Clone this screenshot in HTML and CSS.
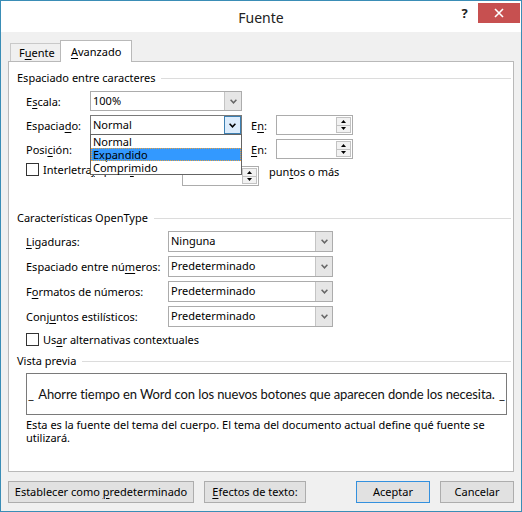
FILE: index.html
```html
<!DOCTYPE html>
<html lang="es">
<head>
    <meta charset="UTF-8">
    <title>Fuente</title>
    <link rel="stylesheet" href="styles.css">
</head>
<body>

<div class="window">
    <div class="titlebar">
        <span class="title">Fuente</span>
        <div class="caption-buttons">
            <span class="help">?</span>
            <span class="close">
                <svg width="10" height="10" viewBox="0 0 10 10"><path d="M1 1L9 9M9 1L1 9" stroke="#fff" stroke-width="1.6"/></svg>
            </span>
        </div>
    </div>

    <div class="client">
        <div class="tabs">
            <span class="tab">F<u>u</u>ente</span>
            <span class="tab active"><u>A</u>vanzado</span>
        </div>

        <div class="panel">
            <!-- Espaciado entre caracteres -->
            <div class="group-title first"><span>Espaciado entre caracteres</span></div>

            <div class="row first-row">
                <span class="lbl lbl-short">E<u>s</u>cala:</span>
                <div class="combo combo-short">
                    <span class="value">100%</span>
                    <span class="arrow"><svg width="7" height="5" viewBox="0 0 7 5"><path d="M0.6 0.8L3.5 3.8L6.4 0.8" fill="none" stroke="#666" stroke-width="1.5"/></svg></span>
                </div>
            </div>

            <div class="row">
                <span class="lbl lbl-short">Espacia<u>d</u>o:</span>
                <div class="combo combo-short focused">
                    <span class="value">Normal</span>
                    <span class="arrow"><svg width="7" height="5" viewBox="0 0 7 5"><path d="M0.6 0.8L3.5 3.8L6.4 0.8" fill="none" stroke="#000" stroke-width="1.5"/></svg></span>
                    <ul class="dropdown">
                        <li>Normal</li>
                        <li class="selected">Expandido</li>
                        <li>Comprimido</li>
                    </ul>
                </div>
                <span class="lbl lbl-en">E<u>n</u>:</span>
                <div class="spin">
                    <span class="spin-field"></span>
                    <span class="spin-btns">
                        <span class="spin-up"><svg width="5" height="3" viewBox="0 0 5 3"><path d="M2.5 0L5 3H0Z" fill="#000"/></svg></span>
                        <span class="spin-down"><svg width="5" height="3" viewBox="0 0 5 3"><path d="M0 0H5L2.5 3Z" fill="#000"/></svg></span>
                    </span>
                </div>
            </div>

            <div class="row">
                <span class="lbl lbl-short">Posi<u>c</u>ión:</span>
                <div class="combo combo-short">
                    <span class="value">Normal</span>
                    <span class="arrow"><svg width="7" height="5" viewBox="0 0 7 5"><path d="M0.6 0.8L3.5 3.8L6.4 0.8" fill="none" stroke="#666" stroke-width="1.5"/></svg></span>
                </div>
                <span class="lbl lbl-en"><u>E</u>n:</span>
                <div class="spin">
                    <span class="spin-field"></span>
                    <span class="spin-btns">
                        <span class="spin-up"><svg width="5" height="3" viewBox="0 0 5 3"><path d="M2.5 0L5 3H0Z" fill="#000"/></svg></span>
                        <span class="spin-down"><svg width="5" height="3" viewBox="0 0 5 3"><path d="M0 0H5L2.5 3Z" fill="#000"/></svg></span>
                    </span>
                </div>
            </div>

            <div class="row kerning-row">
                <span class="checkbox"></span>
                <span class="lbl lbl-kerning">Interletra<u>j</u>e para <u>f</u>uentes:</span>
                <div class="spin kerning-spin">
                    <span class="spin-field"></span>
                    <span class="spin-btns">
                        <span class="spin-up"><svg width="5" height="3" viewBox="0 0 5 3"><path d="M2.5 0L5 3H0Z" fill="#000"/></svg></span>
                        <span class="spin-down"><svg width="5" height="3" viewBox="0 0 5 3"><path d="M0 0H5L2.5 3Z" fill="#000"/></svg></span>
                    </span>
                </div>
                <span class="lbl lbl-points">pun<u>t</u>os o más</span>
            </div>

            <!-- Características OpenType -->
            <div class="group-title second"><span>Características OpenType</span></div>

            <div class="row wide first-row">
                <span class="lbl lbl-long"><u>L</u>igaduras:</span>
                <div class="combo combo-long">
                    <span class="value">Ninguna</span>
                    <span class="arrow"><svg width="7" height="5" viewBox="0 0 7 5"><path d="M0.6 0.8L3.5 3.8L6.4 0.8" fill="none" stroke="#666" stroke-width="1.5"/></svg></span>
                </div>
            </div>
            <div class="row wide">
                <span class="lbl lbl-long">Espaciado entre nú<u>m</u>eros:</span>
                <div class="combo combo-long">
                    <span class="value">Predeterminado</span>
                    <span class="arrow"><svg width="7" height="5" viewBox="0 0 7 5"><path d="M0.6 0.8L3.5 3.8L6.4 0.8" fill="none" stroke="#666" stroke-width="1.5"/></svg></span>
                </div>
            </div>
            <div class="row wide">
                <span class="lbl lbl-long">F<u>o</u>rmatos de números:</span>
                <div class="combo combo-long">
                    <span class="value">Predeterminado</span>
                    <span class="arrow"><svg width="7" height="5" viewBox="0 0 7 5"><path d="M0.6 0.8L3.5 3.8L6.4 0.8" fill="none" stroke="#666" stroke-width="1.5"/></svg></span>
                </div>
            </div>
            <div class="row wide">
                <span class="lbl lbl-long">Conj<u>u</u>ntos estilísticos:</span>
                <div class="combo combo-long">
                    <span class="value">Predeterminado</span>
                    <span class="arrow"><svg width="7" height="5" viewBox="0 0 7 5"><path d="M0.6 0.8L3.5 3.8L6.4 0.8" fill="none" stroke="#666" stroke-width="1.5"/></svg></span>
                </div>
            </div>

            <div class="row check-row">
                <span class="checkbox"></span>
                <span class="lbl">Us<u>a</u>r alternativas contextuales</span>
            </div>

            <!-- Vista previa -->
            <div class="group-title third"><span>Vista previa</span></div>

            <div class="preview">
                <span class="marker">_</span>
                <span class="sample">Ahorre tiempo en Word con los nuevos botones que aparecen donde los necesita.</span>
                <span class="marker">_</span>
            </div>

            <p class="note">Esta es la fuente del tema del cuerpo. El tema del documento actual define qué fuente se<br>utilizará.</p>
        </div>

        <div class="buttons">
            <span class="btn btn-default">Establecer como <u>p</u>redeterminado</span>
            <span class="btn btn-effects"><u>E</u>fectos de texto:</span>
            <span class="btn btn-ok">Aceptar</span>
            <span class="btn btn-cancel">Cancelar</span>
        </div>
    </div>
</div>

</body>
</html>
```

FILE: styles.css
```css
* {
    box-sizing: border-box;
}

body {
    margin: 0;
    font-family: "Noto Sans", "Open Sans", sans-serif;
    font-size: 11px;
    color: #000;
    background: #fff;
}

u {
    text-decoration: underline;
    text-underline-offset: 2px;
}

.window {
    width: 522px;
    height: 512px;
    border: 1px solid #3a8db6;
    background: #f0f0f0;
    display: flex;
    flex-direction: column;
}

/* title bar */
.titlebar {
    height: 31px;
    flex: none;
    background: #fff;
    display: grid;
    grid-template-columns: 1fr auto 1fr;
}

.title {
    grid-column: 2;
    font-size: 14px;
    line-height: 33px;
    color: #222;
}

.caption-buttons {
    grid-column: 3;
    justify-self: end;
    display: flex;
    align-items: flex-start;
    margin-right: 1px;
}

.help {
    width: 27px;
    text-align: center;
    font-weight: bold;
    font-size: 13px;
    line-height: 22px;
    margin-top: 1px;
    color: #222;
}

.close {
    width: 42px;
    height: 20px;
    margin-top: 2px;
    background: #c75050;
    display: flex;
    align-items: center;
    justify-content: center;
}

/* client area */
.client {
    flex: 1;
    padding: 8px 7px 0 7px;
}

.tabs {
    display: flex;
    align-items: flex-end;
    margin-left: 2px;
    height: 21px;
}

.tab {
    width: 51px;
    height: 18px;
    padding-left: 8px;
    border: 1px solid #c9c9c9;
    border-bottom: none;
    line-height: 18px;
    background: #f0f0f0;
}

.tab.active {
    width: 72px;
    height: 22px;
    margin-left: -1px;
    margin-bottom: -1px;
    padding-left: 10px;
    line-height: 21px;
    background: #fff;
    border-color: #b9b9b9;
    position: relative;
    z-index: 1;
}

.panel {
    height: 411px;
    border: 1px solid #b9b9b9;
    background: #fff;
    padding: 0 2px 0 8px;
}

/* group headings with a rule after the text */
.group-title {
    display: flex;
    align-items: center;
    height: 16px;
    line-height: 16px;
}

.group-title::after {
    content: "";
    flex: 1;
    height: 1px;
    margin-left: 6px;
    background: #dcdcdc;
}

.group-title.first {
    margin-top: 8px;
}

.group-title.second {
    margin-top: 25px;
}

.group-title.third {
    margin-top: 7px;
}

.row {
    display: flex;
    align-items: center;
    height: 20px;
    margin-left: 9px;
    margin-top: 4px;
}

.row.first-row {
    margin-top: 5px;
}

.row.wide {
    height: 21px;
}

.lbl {
    white-space: nowrap;
    flex: none;
}

.lbl-short {
    width: 64px;
}

.lbl-long {
    width: 142px;
}

.lbl-en {
    width: 25px;
    margin-left: 9px;
}

.lbl-kerning {
    width: 139px;
    margin-left: 4px;
}

.lbl-points {
    margin-left: 10px;
    line-height: 18px;
}

/* combo boxes */
.combo {
    position: relative;
    height: 100%;
    display: flex;
    border: 1px solid #acacac;
    background: #fff;
}

.combo-short {
    width: 152px;
}

.combo-long {
    width: 165px;
}

.combo .value {
    flex: 1;
    padding-left: 2px;
    line-height: 18px;
    color: #000;
}

.combo .arrow {
    width: 17px;
    border-left: 1px solid #c4c4c4;
    background: #e6e6e6;
    display: flex;
    align-items: center;
    justify-content: center;
}

.combo.focused {
    border-color: #7a7a7a;
}

.combo.focused .arrow {
    border: 1px solid #3c7fb1;
    background: #dcecfc;
}

.dropdown {
    position: absolute;
    top: 100%;
    left: -1px;
    width: 152px;
    margin: 0;
    padding: 0;
    list-style: none;
    border: 1px solid #646464;
    background: #fff;
    z-index: 5;
}

.dropdown li {
    height: 13px;
    line-height: 13px;
    padding-left: 2px;
}

.dropdown li.selected {
    background: #3399ff;
    outline: 1px dotted #e8a040;
    outline-offset: -1px;
}

/* spin boxes */
.spin {
    width: 77px;
    height: 20px;
    display: flex;
    border: 1px solid #acacac;
    background: #fff;
}

.spin-field {
    flex: 1;
}

.spin-btns {
    width: 15px;
    margin: 1px;
    display: flex;
    flex-direction: column;
    border: 1px solid #c2c2c2;
    background: #f2f2f2;
}

.spin-up,
.spin-down {
    flex: 1;
    display: flex;
    align-items: center;
    justify-content: center;
}

.spin-up {
    border-bottom: 1px solid #c2c2c2;
}

.kerning-row {
    height: 22px;
    align-items: flex-start;
}

.kerning-spin {
    margin-top: 3px;
}

.checkbox {
    width: 13px;
    height: 13px;
    flex: none;
    border: 1px solid #333;
    background: #fff;
}

.check-row {
    height: 13px;
    margin-top: 6px;
}

.check-row .checkbox {
    margin-right: 4px;
}

.kerning-row .lbl-kerning {
    line-height: 13px;
}

/* preview */
.preview {
    width: 481px;
    height: 42px;
    margin: 4px 0 0 9px;
    border: 1px solid #7a7a7a;
    display: flex;
    align-items: center;
    justify-content: space-between;
    font-family: "Lato", sans-serif;
    font-size: 13px;
    letter-spacing: -0.1px;
    white-space: nowrap;
    color: #111;
}

.preview .marker {
    padding: 0 1px;
}

.note {
    margin: 3px 0 0 9px;
    line-height: 13px;
    white-space: nowrap;
}

/* bottom buttons */
.buttons {
    display: flex;
    margin-top: 9px;
}

.btn {
    height: 22px;
    line-height: 20px;
    text-align: center;
    border: 1px solid #adadad;
    background: #e1e1e1;
    white-space: nowrap;
}

.btn-default {
    width: 186px;
}

.btn-effects {
    width: 102px;
    margin-left: 10px;
}

.btn-ok {
    width: 74px;
    margin-left: auto;
    border-color: #3390de;
}

.btn-cancel {
    width: 74px;
    margin-left: 10px;
}
```
